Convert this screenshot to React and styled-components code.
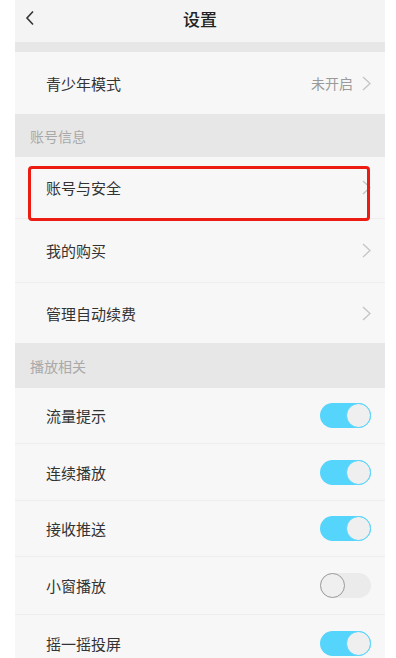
import React, { useState } from "react";
import styled, { createGlobalStyle } from "styled-components";

const GlobalStyle = createGlobalStyle`
  body {
    margin: 0;
    background: #fff;
    font-family: "Noto Sans CJK SC", "Noto Sans", sans-serif;
  }
`;

const Screen = styled.div`
  width: 370px;
  height: 658px;
  margin-left: 15px;
  background: #f7f7f7;
  overflow: hidden;
`;

const Header = styled.div`
  position: relative;
  height: 42px;
  display: flex;
  align-items: center;
  justify-content: center;
  background: #f4f4f4;
`;

const BackButton = styled.div`
  position: absolute;
  left: 10px;
  top: 10px;
  display: flex;
`;

const Title = styled.h1`
  margin: 0;
  font-size: 17px;
  font-weight: 500;
  color: #222;
  margin-top: -6px;
`;

const Gap = styled.div`
  height: 10px;
  background: #e7e7e7;
`;

const SectionTitle = styled.div`
  height: ${(p) => p.h}px;
  display: flex;
  align-items: center;
  padding-left: 15px;
  font-size: 14px;
  color: #a9a9a9;
  background: #e7e7e7;
`;

const Row = styled.div`
  position: relative;
  height: ${(p) => p.h}px;
  display: flex;
  align-items: center;
  padding: 0 14px 0 31px;
  border-top: ${(p) => (p.first ? "none" : "1px solid #eeeeee")};
  box-sizing: border-box;
  background: #f7f7f7;
`;

const Label = styled.span`
  flex: 1;
  font-size: 15px;
  color: #333;
`;

const Value = styled.span`
  font-size: 14px;
  color: #9a9a9a;
  margin-right: 9px;
`;

const Highlight = styled.div`
  position: absolute;
  z-index: 2;
  left: 13px;
  right: 15px;
  top: 9px;
  height: 55px;
  border: 3px solid #ec1c12;
  border-radius: 4px;
  box-sizing: border-box;
  pointer-events: none;
`;

const Track = styled.button`
  position: relative;
  width: 51px;
  height: 25px;
  border-radius: 13px;
  border: none;
  padding: 0;
  background: ${(p) => (p.on ? "#55d4fc" : "#ebebeb")};
  cursor: pointer;
`;

const Knob = styled.span`
  position: absolute;
  top: 0;
  left: ${(p) => (p.on ? "26px" : "0")};
  width: 25px;
  height: 25px;
  border-radius: 50%;
  box-sizing: border-box;
  background: #efefef;
  border: 1.5px solid ${(p) => (p.on ? "#55d4fc" : "#9a9a9a")};
`;

const Chevron = () => (
  <svg width="9" height="15" viewBox="0 0 9 15">
    <path d="M1 1l7 6.5L1 14" fill="none" stroke="#c4c4c4" strokeWidth="1.3" />
  </svg>
);

const Toggle = ({ initial }) => {
  const [on, setOn] = useState(initial);
  return (
    <Track on={on ? 1 : 0} onClick={() => setOn(!on)}>
      <Knob on={on ? 1 : 0} />
    </Track>
  );
};

const toggles = [
  { label: "流量提示", on: true, h: 55 },
  { label: "连续播放", on: true, h: 57 },
  { label: "接收推送", on: true, h: 56 },
  { label: "小窗播放", on: false, h: 58 },
  { label: "摇一摇投屏", on: true, h: 57 },
];

export default function App() {
  return (
    <>
      <GlobalStyle />
      <Screen>
        <Header>
          <BackButton>
            <svg width="10" height="16" viewBox="0 0 10 16">
              <path d="M8 1.5L2 8l6 6.5" fill="none" stroke="#333" strokeWidth="1.6" />
            </svg>
          </BackButton>
          <Title>设置</Title>
        </Header>
        <Gap />
        <Row h={62} first>
          <Label>青少年模式</Label>
          <Value>未开启</Value>
          <Chevron />
        </Row>
        <SectionTitle h={43}>账号信息</SectionTitle>
        <Row h={61} first>
          <Label>账号与安全</Label>
          <Chevron />
          <Highlight />
        </Row>
        <Row h={64}>
          <Label>我的购买</Label>
          <Chevron />
        </Row>
        <Row h={61}>
          <Label>管理自动续费</Label>
          <Chevron />
        </Row>
        <SectionTitle h={45}>播放相关</SectionTitle>
        {toggles.map((t, i) => (
          <Row key={t.label} h={t.h} first={i === 0}>
            <Label>{t.label}</Label>
            <Toggle initial={t.on} />
          </Row>
        ))}
      </Screen>
    </>
  );
}
